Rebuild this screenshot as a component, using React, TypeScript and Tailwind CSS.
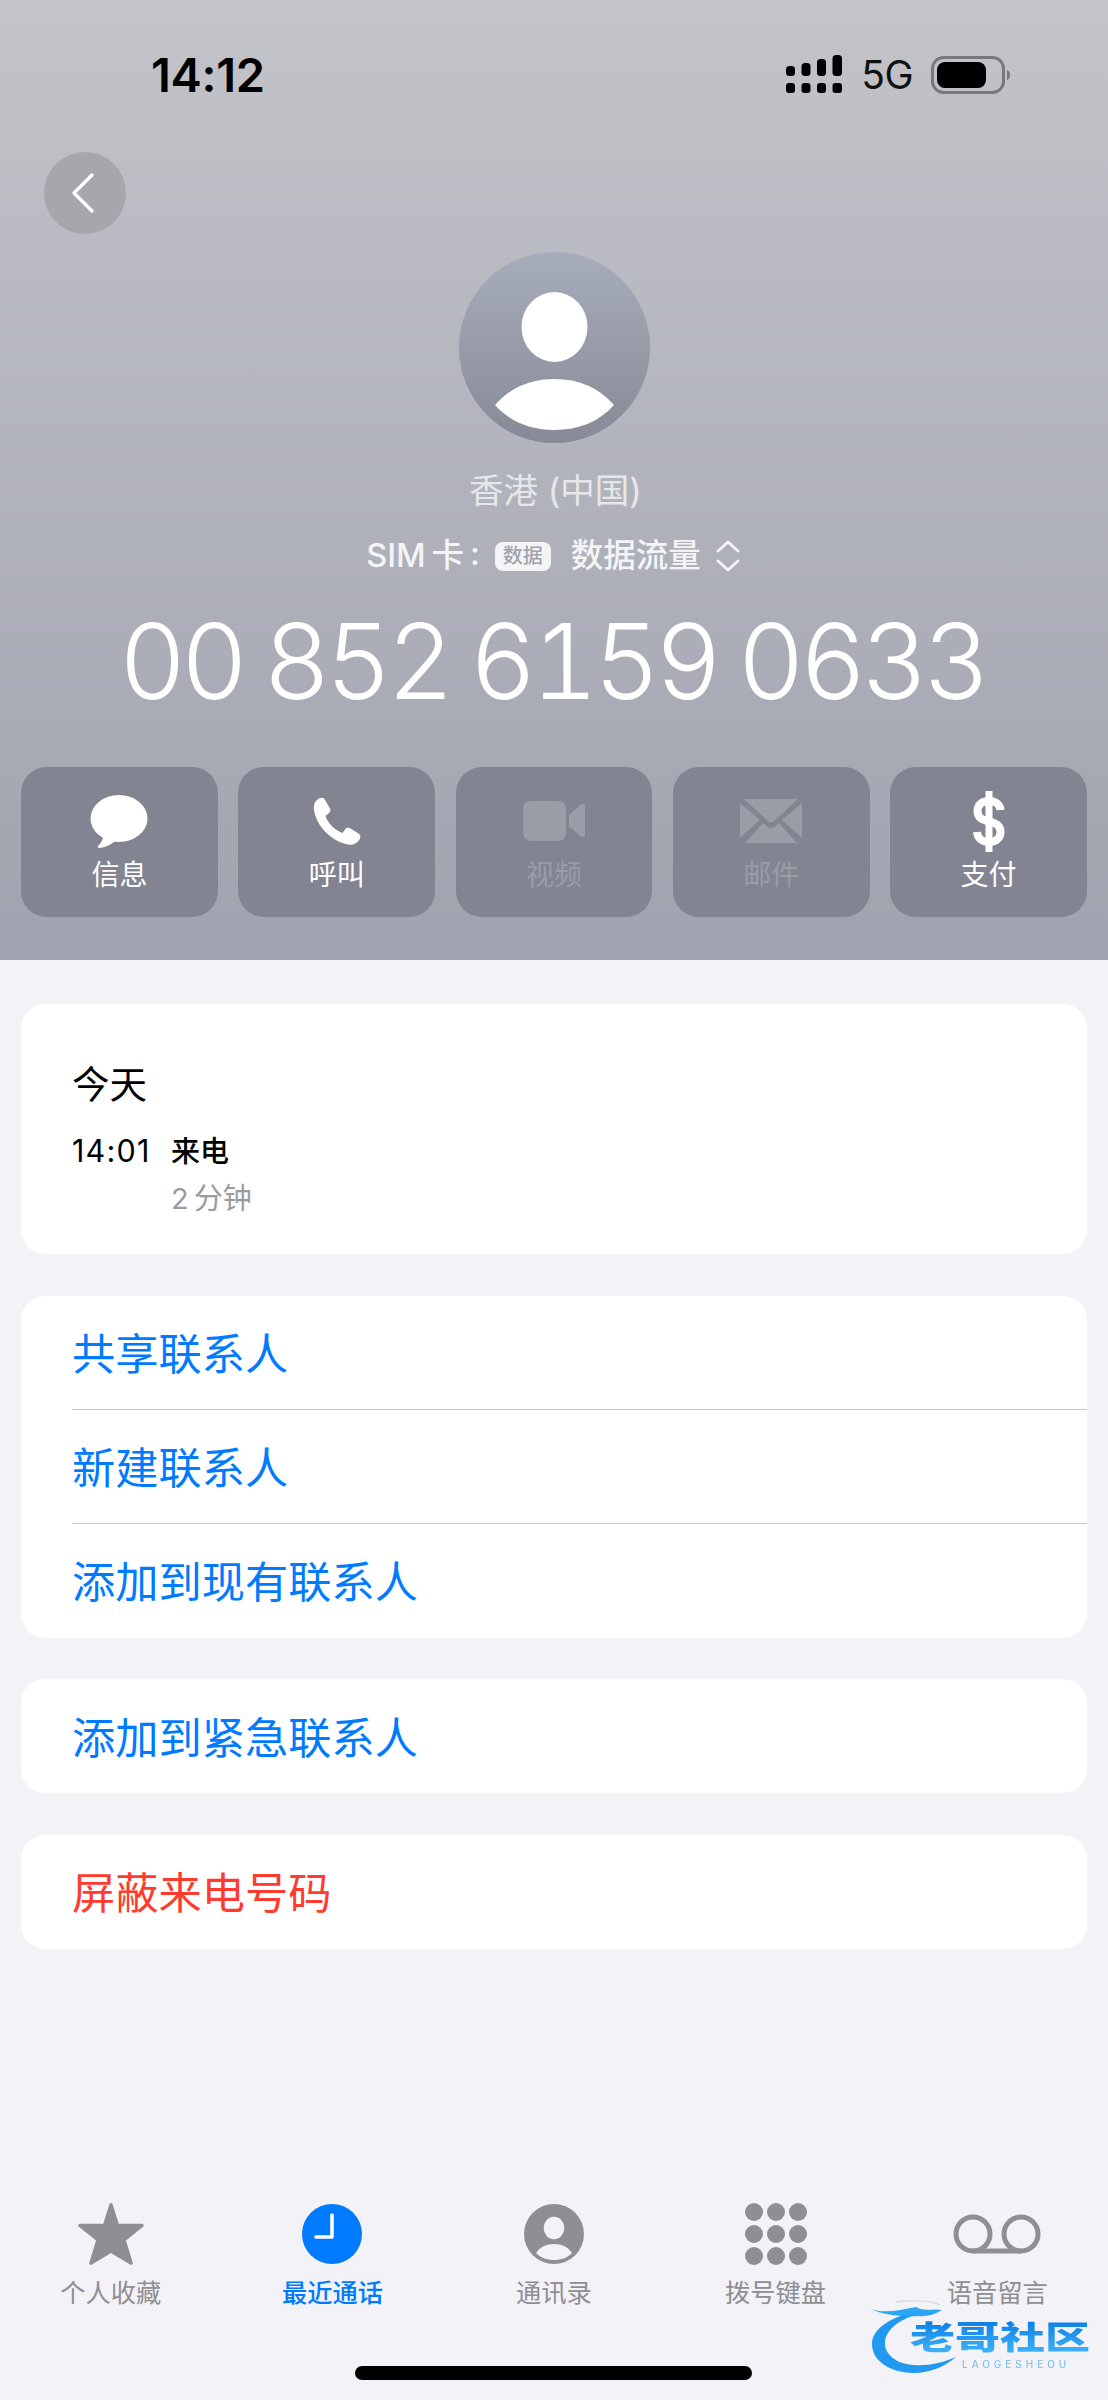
import React from 'react';

const FONT = "font-['Inter','Noto_Sans_CJK_SC',sans-serif]";

function BackIcon() {
  return (
    <svg width="24" height="42" viewBox="0 0 24 42" fill="none" stroke="#fff" strokeWidth="3.4" strokeLinecap="round" strokeLinejoin="round">
      <path d="M21 3 L3 21 L21 39" />
    </svg>
  );
}

function StatusIcons() {
  return (
    <div className="flex items-center pt-[4px]">
      <svg width="57" height="39" viewBox="0 0 57 39" fill="#000">
        <rect x="0" y="11" width="9" height="10" rx="3.5" />
        <rect x="15.5" y="8" width="9" height="13" rx="3.5" />
        <rect x="31" y="4" width="9" height="17" rx="3.5" />
        <rect x="46.5" y="0" width="9.5" height="21" rx="3.5" />
        <rect x="0" y="28" width="9" height="10" rx="3" />
        <rect x="15.5" y="28" width="9" height="10" rx="3" />
        <rect x="31" y="28" width="9" height="10" rx="3" />
        <rect x="46.5" y="28" width="9.5" height="10" rx="3" />
      </svg>
      <span className="ml-[18px] text-[39px] leading-none tracking-[-0.5px] text-[#111]">5G</span>
      <svg className="ml-[18px]" width="81" height="38" viewBox="0 0 81 38" fill="none">
        <rect x="1.5" y="1.5" width="71" height="35" rx="11" stroke="#77777c" strokeWidth="3" />
        <rect x="6" y="6" width="49" height="26" rx="8" fill="#000" />
        <path d="M76 14 C80 15 80 23 76 24 Z" fill="#77777c" />
      </svg>
    </div>
  );
}

function Avatar() {
  return (
    <div className="h-[191px] w-[191px] overflow-hidden rounded-full bg-gradient-to-b from-[#a8adbb] to-[#878a96]">
      <svg width="191" height="191" viewBox="0 0 191 191" fill="#fff">
        <ellipse cx="95.5" cy="75" rx="33" ry="35" />
        <path d="M36 153 C52 135 72 127 95.5 127 C119 127 139 135 155 153 C140 170 119 178 95.5 178 C72 178 51 170 36 153 Z" />
      </svg>
    </div>
  );
}

function MessageIcon() {
  return (
    <svg width="58" height="53" viewBox="0 0 58 53" fill="#fff">
      <ellipse cx="29" cy="23.5" rx="28.500" ry="23.500" />
      <path d="M13 38 C14 44 11 48 8 51 C7 52 8 53 10 53 C16 52 22 49 27 45 Z" />
    </svg>
  );
}

function PhoneIcon() {
  return (
    <svg width="48" height="48" viewBox="0 0 48 48" fill="#fff">
      <path d="M4 3 C7 0.500 10 0 11.500 2 L17 11.500 C18 14 17 15.500 15 17 L12.500 19 C15 27 22 33 29.500 36 L32 32.500 C33.500 30.500 35.500 30.500 37.500 31.500 L45.500 36.500 C47.500 38 48 40 46.500 42.500 C44 46.500 40 48.500 35 47.500 C18 44 3.500 29 1 13 C0.500 8.500 1.500 5 4 3 Z" />
    </svg>
  );
}

function VideoIcon() {
  return (
    <svg width="62" height="40" viewBox="0 0 62 40" fill="#9a9ca8">
      <rect x="0" y="0" width="43" height="40" rx="8" />
      <path d="M46 14 L57 4 C60 2 62 3 62 6 L62 33 C62 36 60 37 57 35 L46 25 Z" />
    </svg>
  );
}

function MailIcon() {
  return (
    <svg width="62" height="44" viewBox="0 0 62 44" fill="#9a9ca8">
      <path d="M4 0 H58 L34 22 C32 24 30 24 28 22 Z" />
      <path d="M0 4 L20 21 L0 39 Z" />
      <path d="M62 4 L42 21 L62 39 Z" />
      <path d="M5 44 L23 24 L26 26.500 C29 29.500 33 29.500 36 26.500 L39 24 L57 44 Z" />
    </svg>
  );
}

function DollarIcon() {
  return (
    <svg width="32" height="61" viewBox="0 0 32 61" fill="none" stroke="#fff" strokeLinecap="butt">
      <path d="M16 1 V60" strokeWidth="7" strokeLinecap="round" />
      <path d="M27.500 19 C27 13 22 10 16 10 C9 10 4.500 14 4.500 20 C4.500 35 27.500 26 27.500 41 C27.500 47 23 51 16 51 C9 51 4.500 47 4 41" strokeWidth="8" />
    </svg>
  );
}

function ActionButton({ icon, label, dim }: { icon: React.ReactNode; label: string; dim?: boolean }) {
  return (
    <div className="flex h-[150px] flex-col items-center rounded-[26px] bg-[#828491]">
      <div className="flex h-[86px] items-center justify-center pt-[22px]">{icon}</div>
      <span className={`mt-[4px] text-[28px] leading-[36px] ${dim ? 'text-[#9a9ca8]' : 'text-white'}`}>{label}</span>
    </div>
  );
}

function Row({ label, red, divider }: { label: string; red?: boolean; divider?: boolean }) {
  return (
    <div className="pl-[51px]">
      <div className={`flex h-[114px] items-center pt-[4px] text-[43.250px] ${red ? 'text-[#ff3b30]' : 'text-[#007aff]'} ${divider ? 'border-b border-[#c9c9cc]' : ''}`}>
        {label}
      </div>
    </div>
  );
}

function StarIcon() {
  return (
    <svg width="66" height="62" viewBox="0 0 66 62" fill="#8e8e93" stroke="#8e8e93" strokeWidth="3.5" strokeLinejoin="round">
      <path d="M33 2 L39.500 22.500 L64 22.500 L46 37 L53 60 L33 48 L13 60 L20 37 L2 22.500 L26.500 22.500 Z" />
    </svg>
  );
}

function ClockIcon() {
  return (
    <svg width="60" height="60" viewBox="0 0 60 60">
      <circle cx="30" cy="30" r="30" fill="#007aff" />
      <path d="M30 11 V33 H14" fill="none" stroke="#fff" strokeWidth="3.6" strokeLinecap="round" strokeLinejoin="round" />
    </svg>
  );
}

function ContactIcon() {
  return (
    <svg width="60" height="60" viewBox="0 0 60 60">
      <circle cx="30" cy="30" r="30" fill="#8e8e93" />
      <ellipse cx="30" cy="24" rx="10.300" ry="11.300" fill="#f2f2f7" />
      <path d="M12 49 C16 43 22 40 30 40 C38 40 44 43 48 49 C43 54 37 56 30 56 C23 56 17 54 12 49 Z" fill="#f2f2f7" />
    </svg>
  );
}

function KeypadIcon() {
  const dots = [0, 1, 2, 3, 4, 5, 6, 7, 8];
  return (
    <div className="grid w-[62px] grid-cols-3 gap-[4px]">
      {dots.map((d) => (
        <div key={d} className="h-[18px] w-[18px] rounded-full bg-[#8e8e93]" />
      ))}
    </div>
  );
}

function VoicemailIcon() {
  return (
    <svg width="88" height="40" viewBox="0 0 88 40" fill="none" stroke="#8e8e93" strokeWidth="5">
      <circle cx="20" cy="20" r="17" />
      <circle cx="68" cy="20" r="17" />
      <path d="M20 37 H68" />
    </svg>
  );
}

function TabItem({ icon, label, active }: { icon: React.ReactNode; label: string; active?: boolean }) {
  return (
    <div className="flex flex-col items-center">
      <div className="flex h-[66px] items-center justify-center">{icon}</div>
      <span className={`mt-[9px] text-[25.250px] leading-[34px] ${active ? 'font-medium text-[#007aff]' : 'text-[#8e8e93]'}`}>{label}</span>
    </div>
  );
}

function Watermark() {
  return (
    <div className="absolute left-[870px] top-[2300px] h-[76px] w-[224px] blur-[0.6px]">
      <svg className="absolute left-0 top-0" width="110" height="76" viewBox="0 0 110 76" fill="none">
        <path d="M44 12 C18 18 2 30 2 44 C2 62 22 73 44 73 C60 73 76 66 86 57 C72 63 58 66 44 65 C26 64 14 54 15 42 C16 30 28 20 48 14 Z" fill="#2199f0" />
        <path d="M0 9 C14 14 30 10 46 7 C54 12 64 8 72 10 C64 15 56 17 48 16 C32 17 14 15 0 9 Z" fill="#2aa6f5" />
        <path d="M26 2 C40 0 60 0 70 5" stroke="#d4dcea" strokeWidth="1.500" />
      </svg>
      <div className="absolute left-[40px] top-[21px] origin-top scale-y-[0.72] whitespace-nowrap bg-gradient-to-b from-[#0b7fe8] to-[#3fb4f7] bg-clip-text text-[45px] font-black leading-[46px] text-transparent">
        老哥社区
      </div>
      <div className="absolute left-[92px] top-[59px] whitespace-nowrap text-[10px] leading-[10px] tracking-[4px] text-[#6dbbef]">LAOGESHEOU</div>
    </div>
  );
}

export default function App() {
  return (
    <div className={`relative flex h-[2400px] w-[1108px] flex-col overflow-hidden bg-[#f2f2f7] ${FONT}`}>
      <header className="flex h-[960px] flex-col bg-gradient-to-b from-[#c3c4c9] to-[#a0a2af]">
        <div className="flex h-[152px] shrink-0 items-start justify-between pl-[151px] pr-[96px] pt-[51px]">
          <span className="text-[47px] font-semibold leading-[48px] tracking-[-0.3px] text-black">14:12</span>
          <StatusIcons />
        </div>
        <div className="pl-[44px]">
          <div className="flex h-[82px] w-[82px] items-center justify-center rounded-full bg-[#a6a7ac] pr-[4px]">
            <BackIcon />
          </div>
        </div>
        <div className="mt-[18px] flex flex-col items-center">
          <Avatar />
          <div className="mt-[27px] pl-[3px] text-[34.500px] leading-[42px] text-[#e6e7ea]">香港 (中国)</div>
          <div className="mt-[22px] flex h-[44px] items-center pr-[2px] text-[32.500px] font-medium text-[#f4f4f6]">
            <span className="[word-spacing:-3px]">SIM 卡</span>
            <span className="ml-[6px] pb-[3px]">:</span>
            <span className="ml-[15px] flex h-[29px] w-[56px] items-center justify-center rounded-[8px] bg-[#f4f4f6] text-[20px] text-[#a0a2ae]">数据</span>
            <span className="ml-[20px]">数据流量</span>
            <svg className="ml-[15px]" width="24" height="32" viewBox="0 0 24 32" fill="none" stroke="#f4f4f6" strokeWidth="3" strokeLinecap="round" strokeLinejoin="round">
              <path d="M2 11 L12 2 L22 11" />
              <path d="M2 21 L12 30 L22 21" />
            </svg>
          </div>
          <div className="mt-[23px] pr-[4px] text-[104px] font-light leading-[120px] tracking-[-5.400px] tabular-nums text-white [word-spacing:-2px]">00 852 6159 0633</div>
        </div>
        <div className="mt-[46px] grid grid-cols-5 gap-[20.500px] px-[21px]">
          <ActionButton icon={<MessageIcon />} label="信息" />
          <ActionButton icon={<PhoneIcon />} label="呼叫" />
          <ActionButton icon={<VideoIcon />} label="视频" dim />
          <ActionButton icon={<MailIcon />} label="邮件" dim />
          <ActionButton icon={<DollarIcon />} label="支付" />
        </div>
      </header>

      <main className="flex flex-col gap-[41.500px] px-[21px] pt-[44px]">
        <section className="h-[250px] rounded-[24px] bg-white pl-[51px] pt-[56px]">
          <div className="text-[37.500px] leading-[50px] text-black">今天</div>
          <div className="mt-[18px] flex">
            <span className="w-[99px] text-[30.500px] leading-[46px] tracking-[1.200px] text-black">14:01</span>
            <div className="flex flex-col pt-[1px]">
              <span className="text-[29px] font-medium leading-[46px] text-black">来电</span>
              <span className="mt-[1px] text-[29px] leading-[46px] text-[#9a9a9f] [word-spacing:-3px]">2 分钟</span>
            </div>
          </div>
        </section>
        <section className="overflow-hidden rounded-[24px] bg-white">
          <Row label="共享联系人" divider />
          <Row label="新建联系人" divider />
          <Row label="添加到现有联系人" />
        </section>
        <section className="overflow-hidden rounded-[24px] bg-white">
          <Row label="添加到紧急联系人" />
        </section>
        <section className="overflow-hidden rounded-[24px] bg-white">
          <Row label="屏蔽来电号码" red />
        </section>
      </main>

      <nav className="mt-auto grid grid-cols-5 px-0 pb-[90px]">
        <TabItem icon={<StarIcon />} label="个人收藏" />
        <TabItem icon={<ClockIcon />} label="最近通话" active />
        <TabItem icon={<ContactIcon />} label="通讯录" />
        <TabItem icon={<KeypadIcon />} label="拨号键盘" />
        <TabItem icon={<VoicemailIcon />} label="语音留言" />
      </nav>

      <div className="absolute bottom-[20px] left-[355px] h-[14px] w-[397px] rounded-full bg-black" />
      <Watermark />
    </div>
  );
}
